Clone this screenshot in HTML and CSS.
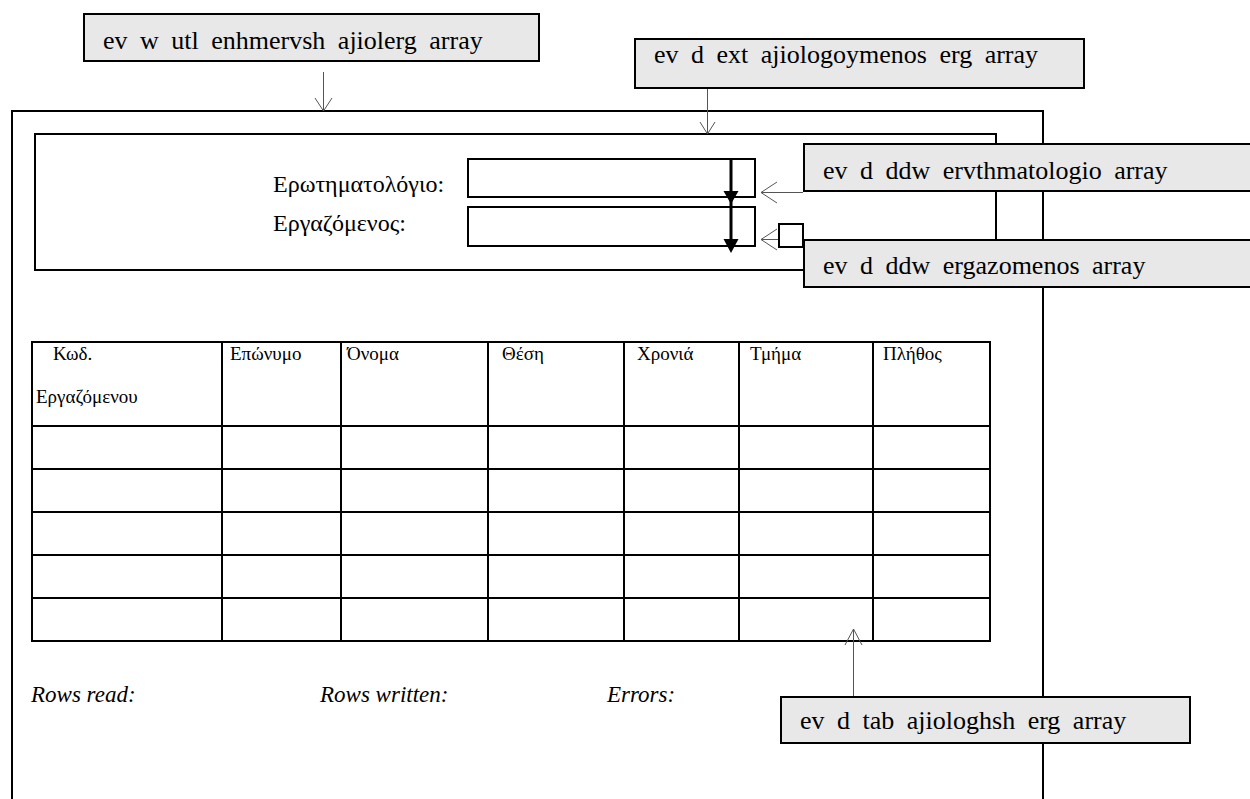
FILE: index.html
```html
<!DOCTYPE html>
<html>
  <head>
    <meta charset="utf-8">
    <title>Αξιολόγηση εργαζομένου</title>
    <link rel="stylesheet" href="styles.css">
  </head>
  <body>
    <!-- παράθυρο αξιολόγησης -->
    <div class="window">
      <div class="params">
        <div class="labels">
          <div>Ερωτηματολόγιο:</div>
          <div>Εργαζόμενος:</div>
        </div>
        <div class="combos">
          <div class="combo"></div>
          <div class="combo combo-2"></div>
          <svg class="drop-line" width="30" height="100" viewBox="0 0 30 100">
            <line x1="15" y1="0" x2="15" y2="82" stroke="#000" stroke-width="3"/>
            <polygon points="7.5,33 22.5,33 15,46" fill="#000"/>
            <polygon points="7.5,81 22.5,81 15,95" fill="#000"/>
          </svg>
        </div>
      </div>

      <table class="grid">
        <colgroup>
          <col style="width:190px"><col style="width:119px"><col style="width:147px"><col style="width:136px">
          <col style="width:115px"><col style="width:134px"><col style="width:117px">
        </colgroup>
        <thead>
          <tr>
            <th><span class="code-1">Κωδ.</span><span class="code-2">Εργαζόμενου</span></th>
            <th>Επώνυμο</th>
            <th>Όνομα</th>
            <th>Θέση</th>
            <th>Χρονιά</th>
            <th>Τμήμα</th>
            <th>Πλήθος</th>
          </tr>
        </thead>
        <tbody>
          <tr><td></td><td></td><td></td><td></td><td></td><td></td><td></td></tr>
          <tr><td></td><td></td><td></td><td></td><td></td><td></td><td></td></tr>
          <tr><td></td><td></td><td></td><td></td><td></td><td></td><td></td></tr>
          <tr><td></td><td></td><td></td><td></td><td></td><td></td><td></td></tr>
          <tr><td></td><td></td><td></td><td></td><td></td><td></td><td></td></tr>
        </tbody>
      </table>

      <div class="counters">
        <span class="counter-read">Rows read:</span>
        <span class="counter-written">Rows written:</span>
        <span>Errors:</span>
      </div>
    </div>

    <!-- βέλη των σημειώσεων -->
    <svg class="connectors" width="1250" height="799" viewBox="0 0 1250 799">
      <g stroke="#555" stroke-width="1" fill="none">
        <line x1="323.5" y1="72" x2="323.5" y2="111"/>
        <polyline points="315,98 323.5,111 332,98"/>
        <line x1="707.5" y1="89" x2="707.5" y2="134"/>
        <polyline points="700,122 707.5,134 715,122"/>
        <line x1="761" y1="192.5" x2="803" y2="192.5"/>
        <polyline points="777,182 761,192.5 777,203"/>
        <line x1="761" y1="239.5" x2="779" y2="239.5"/>
        <polyline points="777,229 761,239.5 777,250"/>
        <line x1="853.5" y1="629" x2="853.5" y2="696"/>
        <polyline points="845,645 853.5,629 862,645"/>
      </g>
      <rect x="779" y="224" width="24" height="23" fill="#fff" stroke="#000" stroke-width="2"/>
    </svg>

    <div class="note note-utl"><span>ev w utl enhmervsh ajiolerg array</span></div>
    <div class="note note-ext"><span>ev d ext ajiologoymenos erg array</span></div>
    <div class="note note-erot"><span>ev d ddw ervthmatologio array</span></div>
    <div class="note note-erg"><span>ev d ddw ergazomenos array</span></div>
    <div class="note note-tab"><span>ev d tab ajiologhsh erg array</span></div>
  </body>
</html>
```

FILE: styles.css
```css
body {
  margin: 0;
  width: 1250px;
  height: 799px;
  overflow: hidden;
  position: relative;
  background: #fff;
  color: #000;
  font-family: "Times New Roman", "Liberation Serif", Tinos, "DejaVu Serif", serif;
}
/* εξωτερικό πλαίσιο παραθύρου */
.window {
  box-sizing: border-box;
  margin: 110px 0 0 11px;
  width: 1033px;
  height: 689px;
  border: 2px solid #000;
  border-bottom: none;
  padding: 21px 0 0 18px;
}
/* πλαίσιο παραμέτρων */
.params {
  box-sizing: border-box;
  margin-left: 3px;
  width: 963px;
  height: 138px;
  border: 2px solid #000;
  padding: 23px 0 0 237px;
  display: flex;
}
.labels {
  width: 194px;
  padding-top: 13px;
  display: flex;
  flex-direction: column;
  gap: 12px;
  font-size: 24px;
  line-height: 27px;
}
.combos {
  position: relative;
  display: flex;
  flex-direction: column;
  gap: 8px;
}
.combo {
  box-sizing: border-box;
  width: 289px;
  height: 40px;
  border: 2px solid #000;
}
.combo-2 {
  height: 41px;
}
.drop-line {
  position: absolute;
  left: 249px;
  top: 0;
  overflow: visible;
}
/* πίνακας αξιολογήσεων */
.grid {
  margin-top: 70px;
  border-collapse: separate;
  border-spacing: 0;
  border-top: 2px solid #000;
  border-left: 2px solid #000;
  table-layout: fixed;
  width: 960px;
  font-size: 19px;
}
.grid th,
.grid td {
  border-right: 2px solid #000;
  border-bottom: 2px solid #000;
  padding: 0;
}
.grid thead tr {
  height: 84px;
}
.grid tbody tr {
  height: 43px;
}
.grid th {
  font-weight: normal;
  text-align: left;
  vertical-align: top;
  line-height: 22px;
  padding-left: 10px;
}
.grid th:nth-child(1) { padding-left: 3px; }
.grid th:nth-child(2) { padding-left: 7px; }
.grid th:nth-child(3) { padding-left: 5px; }
.grid th:nth-child(4) { padding-left: 13px; }
.grid th:nth-child(5) { padding-left: 12px; }
.grid th:nth-child(6) { padding-left: 10px; }
.grid th:nth-child(7) { padding-left: 9px; }
.code-1,
.code-2 {
  display: block;
}
.code-1 {
  padding-left: 17px;
}
.code-2 {
  margin-top: 21px;
}
/* μετρητές */
.counters {
  margin-top: 40px;
  display: flex;
  font-style: italic;
  font-size: 23px;
  line-height: 26px;
}
.counter-read {
  width: 289px;
}
.counter-written {
  width: 287px;
}
/* σημειώσεις */
.connectors {
  position: absolute;
  left: 0;
  top: 0;
}
.note {
  position: absolute;
  box-sizing: border-box;
  height: 49px;
  border: 2px solid #000;
  background: #e8e8e8;
  padding: 11px 0 0 18px;
  font-size: 26px;
  line-height: 30px;
  word-spacing: 6px;
  white-space: nowrap;
}
.note-utl {
  left: 83px;
  top: 13px;
  width: 457px;
}
.note-ext {
  left: 634px;
  top: 38px;
  width: 451px;
  height: 51px;
  padding-top: 0;
}
.note-erot {
  left: 803px;
  top: 143px;
  width: 447px;
  border-right: none;
}
.note-erg {
  left: 803px;
  top: 239px;
  width: 447px;
  border-right: none;
  padding-top: 10px;
}
.note-tab {
  left: 780px;
  top: 696px;
  width: 411px;
  height: 48px;
  padding-top: 8px;
}
```
